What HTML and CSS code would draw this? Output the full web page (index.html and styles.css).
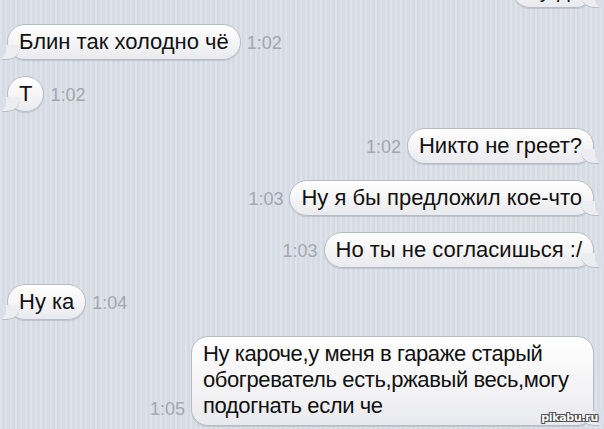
FILE: index.html
```html
<!DOCTYPE html>
<html lang="ru">
<head>
  <meta charset="UTF-8">
  <meta name="viewport" content="width=device-width, initial-scale=1.0">
  <title>Сообщения</title>
  <link rel="stylesheet" href="styles.css">
</head>
<body>
  <div class="chat">
    <!-- cut off at the top -->
    <div class="row row-out row-first">
      <div class="bubble bubble-out">Ну да</div>
    </div>

    <div class="row row-in">
      <div class="bubble bubble-in">Блин так холодно чё</div>
      <span class="time">1:02</span>
    </div>

    <div class="row row-in">
      <div class="bubble bubble-in">Т</div>
      <span class="time">1:02</span>
    </div>

    <div class="row row-out">
      <span class="time">1:02</span>
      <div class="bubble bubble-out">Никто не греет?</div>
    </div>

    <div class="row row-out">
      <span class="time">1:03</span>
      <div class="bubble bubble-out">Ну я бы предложил кое-что</div>
    </div>

    <div class="row row-out">
      <span class="time">1:03</span>
      <div class="bubble bubble-out">Но ты не согласишься :/</div>
    </div>

    <div class="row row-in">
      <div class="bubble bubble-in">Ну ка</div>
      <span class="time">1:04</span>
    </div>

    <div class="row row-out">
      <span class="time">1:05</span>
      <div class="bubble bubble-out bubble-long">Ну кароче,у меня в гараже старый<br>обогреватель есть,ржавый весь,могу<br>подогнать если че</div>
    </div>
  </div>

  <div class="watermark">pikabu.ru</div>
</body>
</html>
```

FILE: styles.css
```css
body {
  margin: 0;
  height: 429px;
  overflow: hidden;
  font-family: "Liberation Sans", Arial, sans-serif;
  background-color: #dadee7;
  background-image: repeating-linear-gradient(90deg, rgba(255, 255, 255, 0.12) 0, rgba(255, 255, 255, 0.12) 2px, rgba(0, 0, 0, 0.015) 2px, rgba(0, 0, 0, 0.015) 5px);
  position: relative;
}

.chat {
  display: flex;
  flex-direction: column;
  gap: 16px;
  padding: 0 10px 0 7px;
}

.row {
  display: flex;
  align-items: flex-end;
  gap: 6px;
}

.row-out {
  justify-content: flex-end;
}

.row-first {
  margin-top: -28px;
}

.bubble {
  position: relative;
  font-size: 22px;
  line-height: 26px;
  color: #111;
  padding: 4px 11px 4px;
  border: 1px solid #b8bcc6;
  border-radius: 18px;
  background: linear-gradient(#ffffff, #f1f1f3 70%, #e9eaee);
  box-shadow: 0 1px 1px rgba(0, 0, 0, 0.12), inset 0 1px 0 #fff;
  white-space: nowrap;
}

.bubble-long {
  letter-spacing: -0.4px;
  min-width: 379px;
  padding-top: 4px;
  padding-bottom: 6px;
  border-radius: 17px;
}

/* tails */
.bubble::before,
.bubble::after {
  content: "";
  position: absolute;
  bottom: -1px;
}

.bubble-in::before {
  left: -6px;
  width: 18px;
  height: 14px;
  background: #ecedf0;
  border-bottom: 1px solid #b8bcc6;
  border-bottom-right-radius: 14px 12px;
}

.bubble-in::after {
  left: -12px;
  width: 10px;
  height: 16px;
  background: #dadee7;
  border-bottom-right-radius: 10px 9px;
}

.bubble-out::before {
  right: -6px;
  width: 18px;
  height: 14px;
  background: #ecedf0;
  border-bottom: 1px solid #b8bcc6;
  border-bottom-left-radius: 14px 12px;
}

.bubble-out::after {
  right: -12px;
  width: 10px;
  height: 16px;
  background: #dadee7;
  border-bottom-left-radius: 10px 9px;
}

.time {
  font-size: 18px;
  line-height: 18px;
  color: #a3a7b0;
  padding-bottom: 8px;
}

.watermark {
  position: absolute;
  right: 6px;
  bottom: 5px;
  font-family: "DejaVu Sans", sans-serif;
  font-size: 11px;
  font-weight: bold;
  color: #fff;
  text-shadow: 0 0 1px #333, 1px 1px 0 #555, -1px -1px 0 #555, 1px -1px 0 #555, -1px 1px 0 #555;
  letter-spacing: -0.3px;
}
```
